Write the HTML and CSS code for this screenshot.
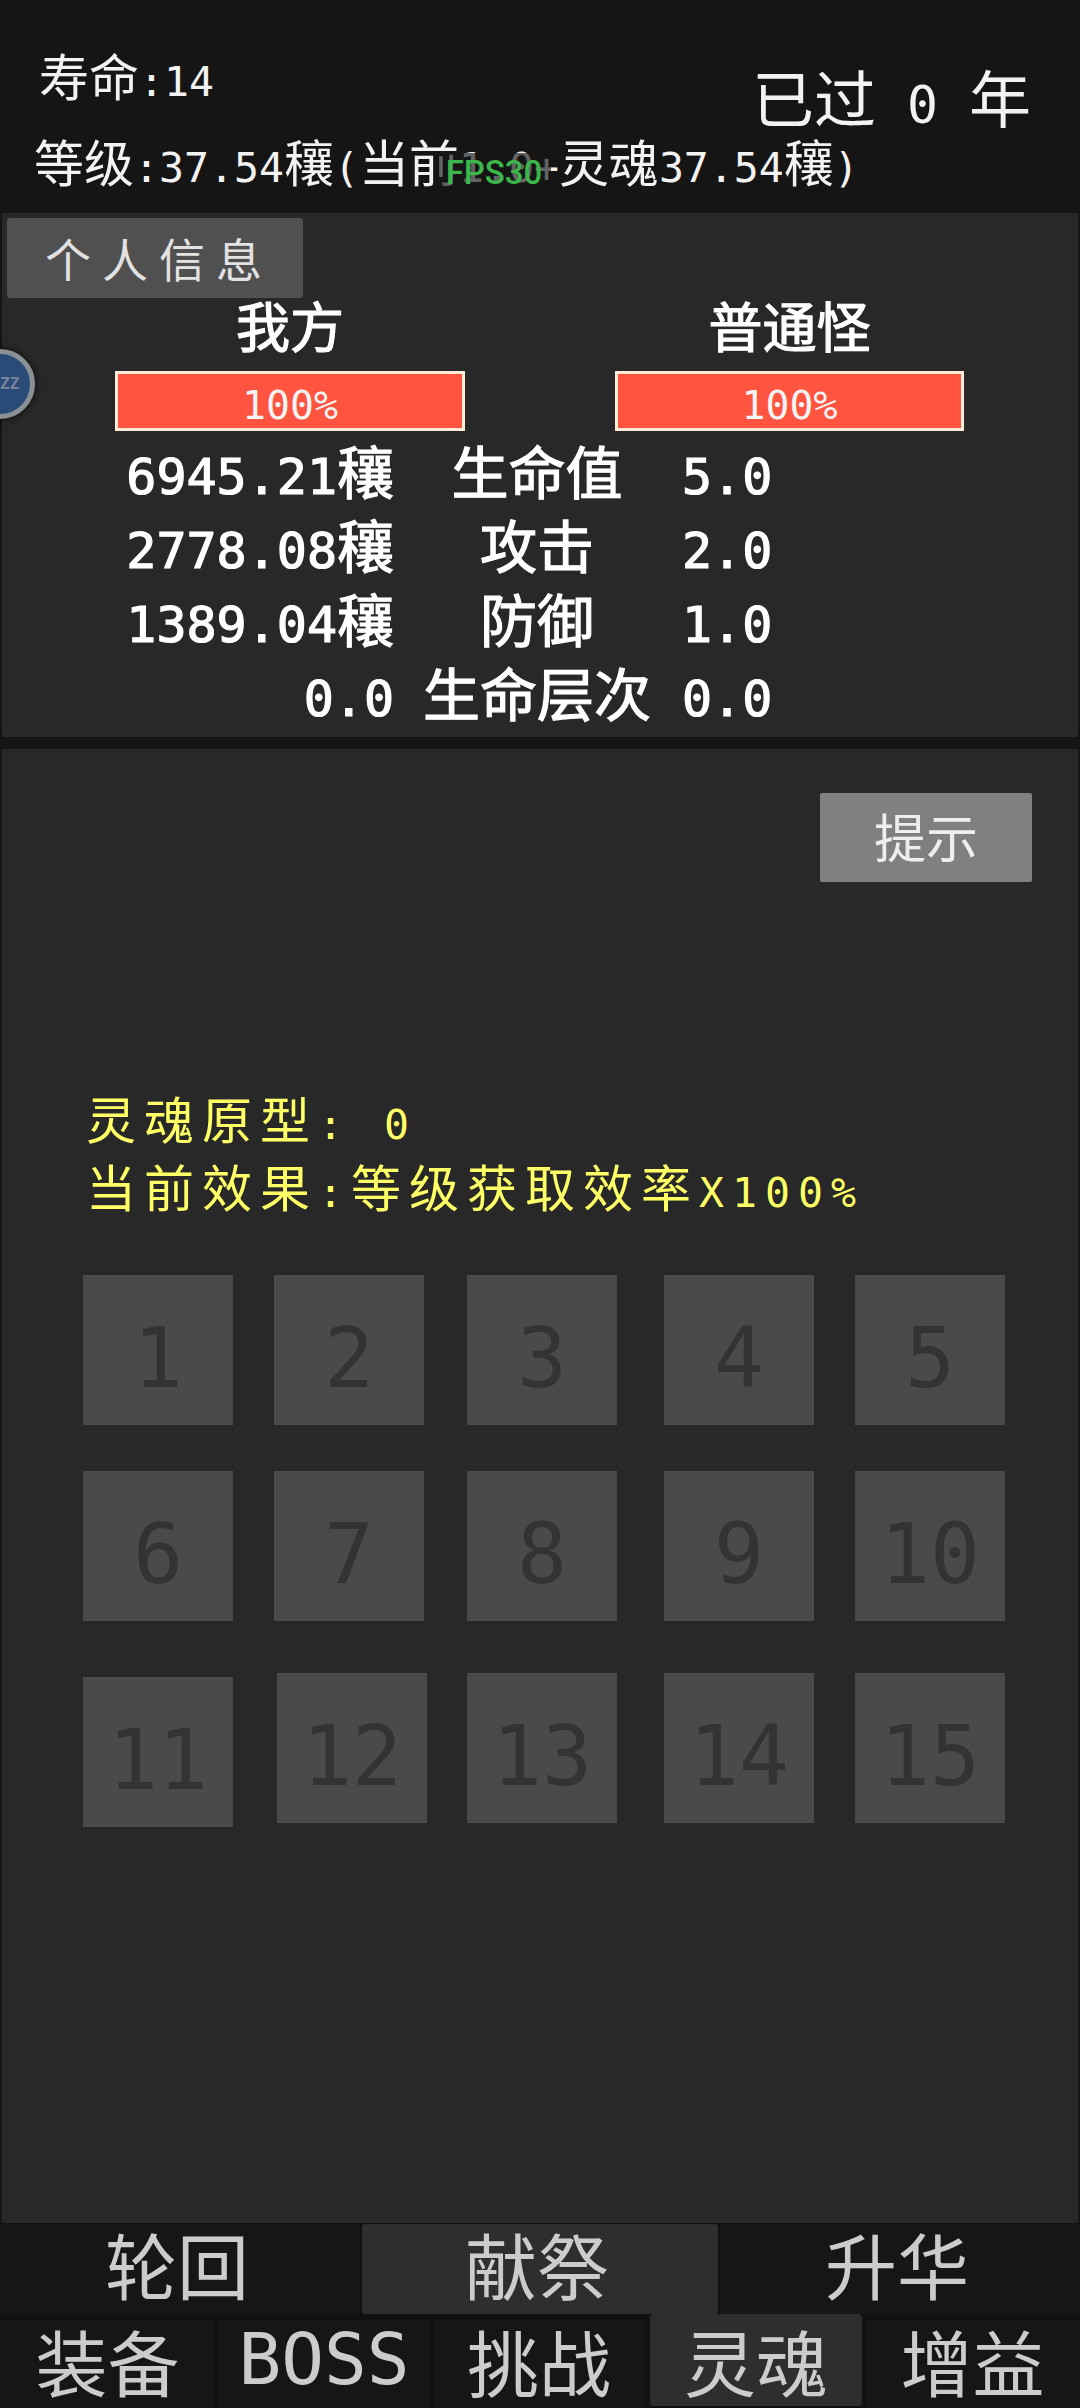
FILE: index.html
```html
<!DOCTYPE html>
<html lang="zh-Hans">
<head>
<meta charset="utf-8">
<title>灵魂</title>
<link rel="stylesheet" href="styles.css">
</head>
<body>
<div class="app">
  <header class="top">
    <div class="top-row">
      <div class="life">寿命<span class="n">:14</span></div>
      <div class="years">已过<span class="n"> 0 </span>年</div>
    </div>
    <div class="level">等级<span class="n">:37.54</span>穰<span class="n">(</span>当前<span class="n">1.0+</span>灵魂<span class="n">37.54</span>穰<span class="n">)</span></div>
  </header>

  <section class="panel info">
    <div class="info-btn">个人信息</div>
    <div class="sides">
      <div class="side-name">我方</div>
      <div class="side-name">普通怪</div>
      <div class="bar"><span class="n">100%</span></div>
      <div class="bar"><span class="n">100%</span></div>
    </div>
    <div class="stats">
      <div class="val"><span class="n">6945.21</span>穰</div><div class="lab">生命值</div><div class="val2"><span class="n">5.0</span></div>
      <div class="val"><span class="n">2778.08</span>穰</div><div class="lab">攻击</div><div class="val2"><span class="n">2.0</span></div>
      <div class="val"><span class="n">1389.04</span>穰</div><div class="lab">防御</div><div class="val2"><span class="n">1.0</span></div>
      <div class="val"><span class="n">0.0</span></div><div class="lab">生命层次</div><div class="val2"><span class="n">0.0</span></div>
    </div>
  </section>

  <section class="panel soul">
    <div class="hint-row"><div class="hint">提示</div></div>
    <div class="soul-text">
      <div class="soul-line">灵魂原型<span class="n">: 0</span></div>
      <div class="soul-line">当前效果<span class="n">:</span>等级获取效率<span class="n">X100%</span></div>
    </div>
    <div class="cells">
      <div class="cell">1</div><div class="cell">2</div><div class="cell">3</div><div class="cell">4</div><div class="cell">5</div>
      <div class="cell">6</div><div class="cell">7</div><div class="cell">8</div><div class="cell">9</div><div class="cell">10</div>
      <div class="cell low">11</div><div class="cell shifted">12</div><div class="cell">13</div><div class="cell">14</div><div class="cell">15</div>
    </div>
  </section>

  <nav class="tabs-a">
    <div class="tab">轮回</div>
    <div class="tab on">献祭</div>
    <div class="tab">升华</div>
  </nav>
  <nav class="tabs-b">
    <div class="tab">装备</div>
    <div class="tab latin">BOSS</div>
    <div class="tab">挑战</div>
    <div class="tab on raised">灵魂</div>
    <div class="tab">增益</div>
  </nav>

  <div class="ball"><span class="ball-text">ZZ</span></div>
  <div class="fps">FPS30</div>
</div>
</body>
</html>
```
FILE: styles.css
```css
* { box-sizing: border-box; }
html, body { margin: 0; padding: 0; background: #151515; }
body {
  font-family: "Noto Sans CJK SC", "DejaVu Sans Mono", monospace;
  overflow: hidden;
}
.app {
  position: relative;
  width: 1080px;
  height: 2408px;
  overflow: hidden;
  display: flex;
  flex-direction: column;
}
/* half-width digits and punctuation next to full-width CJK */
.n { font-family: "DejaVu Sans Mono", monospace; font-size: .83em; white-space: pre; }

/* header */
.top { height: 213px; padding-top: 49px; color: #f2f2f2; }
.top-row { display: flex; justify-content: space-between; align-items: flex-start; padding: 0 49px 0 39px; height: 80px; }
.life { font-size: 50px; line-height: 50px; }
.years { font-size: 62px; line-height: 64px; margin-top: 15px; white-space: pre; }
.level { font-size: 50px; line-height: 50px; margin: 6px 0 0 34px; white-space: nowrap; }

/* panels */
.panel { background: #282828; margin: 0 2px; border-radius: 2px; }
.info { height: 524px; padding-top: 5px; }
.info-btn {
  width: 296px; height: 80px; margin-left: 5px;
  background: #505050; border-radius: 3px; color: #e2e2e2;
  font-size: 46px; line-height: 78px; letter-spacing: 11px; padding-left: 38px;
}
.sides {
  display: grid;
  grid-template-columns: 350px 349px;
  column-gap: 150px;
  grid-template-rows: 58px 60px;
  row-gap: 15px;
  margin-left: 113px;
}
.side-name { font-size: 54px; line-height: 54px; color: #fff; text-align: center; -webkit-text-stroke: 1.2px #fff; }
.bar {
  background: #ff5540; border: 3px solid #ffecd8; color: #f4f4f4;
  font-size: 48px; line-height: 48px; text-align: center;
}
.stats {
  display: grid;
  grid-template-columns: 392px 286px 1fr;
  grid-auto-rows: 74px;
  margin-top: 1px;
  color: #fff; font-size: 57px; line-height: 74px;
  -webkit-text-stroke: 1.2px #fff;
}
.stats .n { font-size: 50px; }
.val { text-align: right; white-space: nowrap; }
.lab { text-align: center; white-space: nowrap; }
.val2 { padding-left: 2px; }

.soul { height: 1474px; margin-top: 12px; padding-top: 44px; }
.hint-row { display: flex; justify-content: flex-end; padding-right: 46px; }
.hint {
  width: 212px; height: 89px; background: #808080; border-radius: 2px;
  color: #eee; font-size: 52px; line-height: 85px; text-align: center;
}
.soul-text {
  margin-top: 201px; margin-left: 84px;
  color: #ffff66; font-size: 50px; line-height: 68px; letter-spacing: 8px;
}
.soul-line { white-space: nowrap; height: 68px; }
.cells {
  display: grid;
  grid-template-columns: 191px 193px 197px 191px 150px;
  grid-template-rows: 196px 202px 150px;
  margin: 56px 0 0 81px;
}
.cell {
  width: 150px; height: 150px; background: #4a4a4a; color: #333;
  font-family: "DejaVu Sans Mono", monospace;
  font-size: 83px; line-height: 168px; text-align: center;
}
.low { margin-top: 4px; }
.shifted { margin-left: 3px; }

/* tabs */
.tabs-a { display: grid; grid-template-columns: 360px 356px 360px; column-gap: 2px; height: 91px; background: #111; }
.tabs-b { display: grid; grid-template-columns: 215px 212px 212px 214px 215px; column-gap: 3px; height: 94px; background: #111; }
.tab { background: #161616; color: #ccc; font-size: 72px; line-height: 78px; text-align: center; white-space: nowrap; }
.tabs-a .tab { border-radius: 3px; margin-top: 1px; padding-right: 6px; }
.tabs-b .tab { margin-top: 6px; line-height: 80px; }
.tab.on { background: #2e2e2e; }
.tabs-b .tab.raised { margin-top: 0; margin-left: 2px; line-height: 92px; margin-bottom: 2px; border-radius: 4px; }
.latin { font-family: "DejaVu Sans Mono", monospace; font-size: 71px; }

/* overlays */
.ball {
  position: absolute; left: -35px; top: 349px;
  width: 70px; height: 70px; border-radius: 50%;
  background: #2a4a78; border: 5px solid #8a9096;
  box-shadow: 0 0 8px rgba(0,0,0,.7);
}
.ball-text {
  position: absolute; left: 30px; top: 18px;
  color: #74829a; font: 700 16px/24px "DejaVu Sans Mono", monospace;
}
.fps {
  position: absolute; left: 437px; top: 153px;
  width: 114px; height: 40px; border-radius: 8px;
  background: rgba(21,21,21,.65);
  color: #3cb64a; font: 500 33px/40px Roboto, sans-serif;
  text-align: center;
}
```
